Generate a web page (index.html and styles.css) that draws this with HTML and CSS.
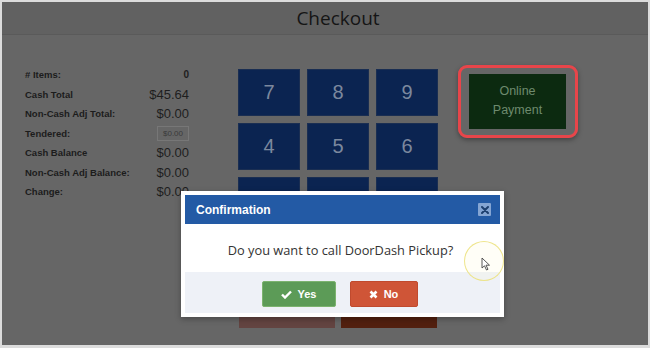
FILE: index.html
```html
<!DOCTYPE html>
<html>
<head>
<meta charset="utf-8">
<link rel="stylesheet" href="styles.css">
</head>
<body>
<div class="frame">
  <div class="page">
    <header class="title">Checkout</header>
    <main class="content">
      <section class="totals">
        <div class="row"><span class="lbl">#&nbsp;Items:</span><span class="val small">0</span></div>
        <div class="row"><span class="lbl">Cash Total</span><span class="val">$45.64</span></div>
        <div class="row"><span class="lbl">Non-Cash Adj Total:</span><span class="val">$0.00</span></div>
        <div class="row"><span class="lbl">Tendered:</span><span class="input">$0.00</span></div>
        <div class="row"><span class="lbl">Cash Balance</span><span class="val">$0.00</span></div>
        <div class="row"><span class="lbl">Non-Cash Adj Balance:</span><span class="val">$0.00</span></div>
        <div class="row"><span class="lbl">Change:</span><span class="val">$0.00</span></div>
      </section>
      <section class="keypad">
        <div class="key">7</div><div class="key">8</div><div class="key">9</div>
        <div class="key">4</div><div class="key">5</div><div class="key">6</div>
        <div class="key"></div><div class="key"></div><div class="key"></div>
        <div class="key"></div><div class="key"></div><div class="key"></div>
        <div class="bottom">
          <div class="wide brown1"></div>
          <div class="wide brown2"></div>
        </div>
      </section>
      <section class="online">
        <div class="highlight">
          <div class="online-btn">Online<br>Payment</div>
        </div>
      </section>
    </main>
  </div>

  <div class="modal">
    <div class="modal-head">
      <span>Confirmation</span>
      <span class="close"><svg width="8" height="8" viewBox="0 0 8 8"><path d="M1 1L7 7M7 1L1 7" stroke="#1d3f6e" stroke-width="2" stroke-linecap="round"/></svg></span>
    </div>
    <div class="modal-body">Do you want to call DoorDash Pickup?</div>
    <div class="modal-foot">
      <div class="btn yes"><svg width="11" height="9" viewBox="0 0 11 9"><path d="M1 4.5L4 7.5L10 1.5" fill="none" stroke="#fff" stroke-width="2.4"/></svg>Yes</div>
      <div class="btn no"><svg width="9" height="9" viewBox="0 0 9 9"><path d="M1.5 1.5L7.5 7.5M7.5 1.5L1.5 7.5" stroke="#fff" stroke-width="2.6"/></svg>No</div>
    </div>
  </div>

  <div class="cursor-ring"></div>
  <svg class="cursor" width="10" height="14" viewBox="0 0 10 14"><path d="M1 1L1 11L3.5 8.8L5.5 13L7 12.3L5 8.2L8.5 8.2Z" fill="#fff" stroke="#444" stroke-width="0.9"/></svg>
</div>
</body>
</html>
```

FILE: styles.css
```css
* { box-sizing: border-box; }
html, body { margin: 0; padding: 0; }
body {
  width: 650px;
  height: 348px;
  background: #dcdcdc;
  font-family: "Liberation Sans", Arial, sans-serif;
  overflow: hidden;
}
.frame {
  position: relative;
  width: 650px;
  height: 348px;
  padding: 2px 2px 3px 2px;
}
.page {
  width: 646px;
  height: 343px;
  background: #666666;
  overflow: hidden;
  display: flex;
  flex-direction: column;
}
.title {
  height: 33px;
  background: #616161;
  border-bottom: 1px solid #5a5a5a;
  text-align: center;
  font-family: "Open Sans", "Noto Sans", sans-serif;
  font-size: 19px;
  line-height: 32px;
  color: #151515;
  padding-left: 26px;
}
.content {
  display: flex;
  align-items: flex-start;
  padding-top: 34px;
}
.totals {
  width: 164px;
  margin-left: 23px;
  margin-top: -4px;
  display: flex;
  flex-direction: column;
}
.row {
  height: 19.5px;
  display: flex;
  justify-content: space-between;
  align-items: center;
}
.lbl {
  font-size: 9.5px;
  font-weight: bold;
  color: #1c1c1c;
}
.val {
  font-size: 13px;
  color: #1e1e1e;
}
.val.small { font-size: 10px; font-weight: bold; }
.input {
  width: 32px;
  height: 15px;
  border: 1px solid #777;
  font-size: 8px;
  color: #3a3a3a;
  text-align: center;
  line-height: 13px;
}
.keypad {
  margin-left: 49px;
  width: 200px;
  display: grid;
  grid-template-columns: repeat(3, 62px);
  grid-auto-rows: 47px;
  column-gap: 7px;
  row-gap: 7px;
}
.key {
  background: #0b2451;
  border: 1px solid #1a2e52;
  color: #7b889e;
  font-size: 20px;
  display: flex;
  align-items: center;
  justify-content: center;
}
.bottom {
  grid-column: 1 / 4;
  display: flex;
  gap: 6px;
  padding-left: 1px;
}
.wide { width: 96px; height: 43px; }
.brown1 { background: #634441; }
.brown2 { background: #52200f; }
.online { margin-left: 20px; margin-top: -4px; }
.highlight {
  width: 120px;
  height: 73px;
  border: 3px solid #e8454a;
  border-radius: 9px;
  box-shadow: 0 2px 5px rgba(0,0,0,0.35);
  padding: 6px 0 0 8px;
}
.online-btn {
  width: 97px;
  height: 55px;
  background: #0c2a10;
  color: #6e8a6e;
  font-size: 12.5px;
  line-height: 19px;
  text-align: center;
  padding-top: 8px;
}
.modal {
  position: absolute;
  left: 181px;
  top: 191px;
  width: 323px;
  height: 126px;
  background: #fff;
  padding: 4px 4px 0 4px;
  box-shadow: 0 2px 6px rgba(0,0,0,0.3);
}
.modal-head {
  height: 29px;
  background: #235aa5;
  color: #fff;
  font-weight: bold;
  font-size: 12px;
  display: flex;
  align-items: center;
  justify-content: space-between;
  padding: 0 9px 0 11px;
}
.close {
  width: 13px;
  height: 13px;
  background: #85a5d3;
  border-radius: 1px;
  display: flex;
  align-items: center;
  justify-content: center;
}
.modal-body {
  height: 48px;
  text-align: center;
  font-family: "Open Sans", "Noto Sans", sans-serif;
  font-size: 12.8px;
  color: #333;
  line-height: 52px;
  padding-right: 4px;
}
.modal-foot {
  height: 41px;
  background: #eef1f7;
  display: flex;
  justify-content: center;
  gap: 14px;
  padding-top: 9px;
  padding-right: 6px;
}
.btn {
  height: 26px;
  color: #fff;
  font-size: 11px;
  font-weight: bold;
  display: flex;
  align-items: center;
  justify-content: center;
  gap: 6px;
  border-radius: 2px;
}
.yes { width: 74px; background: #5c9b57; border: 1px solid #7cb36f; }
.no { width: 68px; background: #cf5537; border: 1px solid #c04a2e; }
.cursor-ring {
  position: absolute;
  left: 464px;
  top: 241px;
  width: 40px;
  height: 40px;
  border-radius: 50%;
  border: 1.5px solid rgba(235, 225, 120, 0.85);
  background: rgba(255, 250, 200, 0.15);
}
.cursor {
  position: absolute;
  left: 481px;
  top: 257px;
}
```
